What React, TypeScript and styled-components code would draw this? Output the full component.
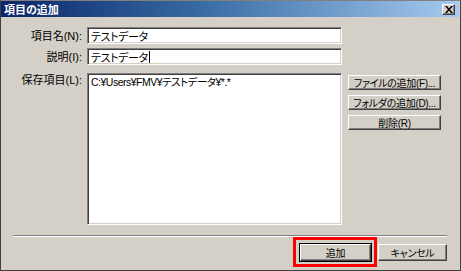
import React from 'react';
import styled, { createGlobalStyle } from 'styled-components';

const GlobalStyle = createGlobalStyle`
  html, body {
    margin: 0;
    padding: 0;
    background: #d4d0c8;
  }

  body {
    font-family: "Liberation Sans", "Noto Sans CJK JP", sans-serif;
    font-size: 11px;
    font-feature-settings: "palt";
    color: #000;
  }
`;

const Window = styled.div`
  box-sizing: border-box;
  width: 461px;
  height: 271px;
  display: flex;
  flex-direction: column;
  padding: 0 1px 1px 0;
  background: #d4d0c8;
  border: 1px solid #404040;
  border-top-color: #808080;
`;

const TitleBar = styled.div`
  display: flex;
  align-items: center;
  justify-content: space-between;
  height: 16px;
  padding: 0 4px 0 3px;
  background: linear-gradient(to right, #0a246a 0%, #3a6ea5 45%, #a6caf0 100%);
`;

const Title = styled.span`
  color: #fff;
  font-weight: bold;
  font-size: 11px;
`;

const CloseButton = styled.span`
  box-sizing: border-box;
  width: 13px;
  height: 11px;
  display: flex;
  align-items: center;
  justify-content: center;
  background: #d4d0c8;
  border: 1px solid;
  border-color: #fff #404040 #404040 #fff;
  box-shadow: inset -1px -1px #808080;
`;

const Body = styled.div`
  display: flex;
  flex-direction: column;
  padding: 10px 12px 0 12px;
`;

const FormGrid = styled.div`
  display: grid;
  grid-template-columns: 74px 255px 99px;
  row-gap: 4px;
  align-items: center;
`;

const Label = styled.label<{ $top?: boolean }>`
  justify-self: end;
  padding-right: 5px;
  align-self: ${(p) => (p.$top ? 'start' : 'center')};
  padding-top: ${(p) => (p.$top ? '5px' : '0')};
  line-height: 12px;
  white-space: nowrap;
`;

const sunken = `
  box-sizing: border-box;
  background: #fff;
  border: 1px solid;
  border-color: #808080 #fff #fff #808080;
  box-shadow: inset 1px 1px #404040, inset -1px -1px #d4d0c8;
`;

const TextBox = styled.div`
  ${sunken}
  height: 17px;
  display: flex;
  align-items: center;
  padding: 0 3px;
  font-size: 11px;
  letter-spacing: -0.4px;
  white-space: nowrap;
`;

const Caret = styled.span`
  display: inline-block;
  width: 0;
  height: 12px;
  margin-left: 1px;
  border-left: 1px solid #000;
`;

const ListBox = styled.div`
  ${sunken}
  height: 152px;
  margin-top: 4px;
  padding: 2px 3px;
  align-self: start;
  font-size: 10.5px;
  line-height: 12px;
  letter-spacing: -0.5px;
  white-space: nowrap;
`;

const SideButtons = styled.div`
  display: flex;
  flex-direction: column;
  gap: 5px;
  margin-left: 6px;
  margin-top: 6px;
  align-self: start;
`;

const Button = styled.button<{ $width?: number; $height?: number }>`
  box-sizing: border-box;
  width: ${(p) => (p.$width ? `${p.$width}px` : '100%')};
  height: ${(p) => p.$height ?? 15}px;
  padding: 0;
  margin: 0;
  font: inherit;
  font-size: 10px;
  letter-spacing: -0.3px;
  white-space: nowrap;
  color: #000;
  background: #d4d0c8;
  border: 1px solid;
  border-color: #fff #404040 #404040 #fff;
  box-shadow: inset -1px -1px #808080;
  display: flex;
  align-items: center;
  justify-content: center;
`;

const DefaultButton = styled(Button)`
  outline: 1px solid #000;
`;

const Separator = styled.div`
  height: 0;
  margin-top: 10px;
  border-top: 1px solid #808080;
  border-bottom: 1px solid #fff;
`;

const Footer = styled.div`
  display: flex;
  justify-content: flex-end;
  align-items: center;
  gap: 7px;
  margin-top: 7px;
`;

const Highlight = styled.div`
  position: relative;
  display: flex;
`;

const RedFrame = styled.div`
  position: absolute;
  left: -7px;
  right: -6px;
  top: -7px;
  bottom: -6px;
  border: 3px solid #ff0000;
  pointer-events: none;
`;

export default function App() {
  return (
    <>
      <GlobalStyle />
      <Window>
        <TitleBar>
          <Title>項目の追加</Title>
          <CloseButton>
            <svg width="8" height="7" viewBox="0 0 8 7">
              <path d="M0 0h2l2 2.5L6 0h2L5 3.5 8 7H6L4 4.5 2 7H0l3-3.5z" fill="#000" />
            </svg>
          </CloseButton>
        </TitleBar>
        <Body>
          <FormGrid>
            <Label>項目名(N):</Label>
            <TextBox>テストデータ</TextBox>
            <span />

            <Label>説明(I):</Label>
            <TextBox>
              テストデータ
              <Caret />
            </TextBox>
            <span />

            <Label $top>保存項目(L):</Label>
            <ListBox>C:¥Users¥FMV¥テストデータ¥*.*</ListBox>
            <SideButtons>
              <Button>ファイルの追加(F)...</Button>
              <Button>フォルダの追加(D)...</Button>
              <Button>削除(R)</Button>
            </SideButtons>
          </FormGrid>
          <Separator />
          <Footer>
            <Highlight>
              <DefaultButton $width={71} $height={17}>
                追加
              </DefaultButton>
              <RedFrame />
            </Highlight>
            <Button $width={69} $height={17}>
              キャンセル
            </Button>
          </Footer>
        </Body>
      </Window>
    </>
  );
}
